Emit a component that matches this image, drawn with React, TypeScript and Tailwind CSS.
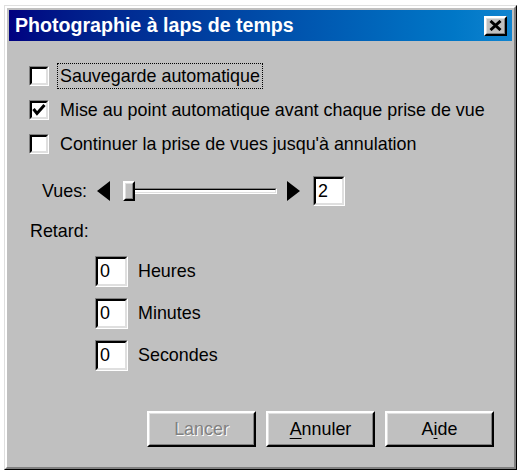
import React from "react";

function Sunken({ className, children }: { className: string; children?: React.ReactNode }) {
  return (
    <div className={`border border-t-[#808080] border-l-[#808080] border-r-white border-b-white ${className}`}>
      <div className="w-full h-full border-2 border-t-black border-l-black border-r-[#dfdfdf] border-b-[#dfdfdf] bg-white flex items-center">
        {children}
      </div>
    </div>
  );
}

function Raised({ className, children }: { className: string; children?: React.ReactNode }) {
  return (
    <div className={`border-2 border-t-white border-l-white border-r-black border-b-black ${className}`}>
      <div className="w-full h-full border border-t-[#dfdfdf] border-l-[#dfdfdf] border-r-[#808080] border-b-[#808080] bg-[#c0c0c0] flex items-center justify-center">
        {children}
      </div>
    </div>
  );
}

function CheckRow({ checked, label, focus }: { checked: boolean; label: string; focus?: boolean }) {
  return (
    <div className="h-[34px] flex items-center pl-[20px]">
      <Sunken className="w-[20px] h-[20px]">
        {checked && (
          <svg width="14" height="14" viewBox="0 0 14 14" className="ml-[0px]">
            <polyline points="1.5,6 5,10.5 12.5,2" fill="none" stroke="black" strokeWidth="3" strokeLinejoin="miter" />
          </svg>
        )}
      </Sunken>
      <span
        className={`ml-[8px] px-[2px] leading-[24px] ${focus ? "border border-dotted border-black" : "border border-transparent"}`}
      >
        {label}
      </span>
    </div>
  );
}

function EditRow({ label }: { label: string }) {
  return (
    <div className="h-[31px] flex items-center pl-[86px]">
      <Sunken className="w-[33px] h-[31px]">
        <span className="pl-[2px]">0</span>
      </Sunken>
      <span className="ml-[10px]">{label}</span>
    </div>
  );
}

export default function App() {
  return (
    <div className="w-[520px] h-[470px] bg-white pt-[5px] pl-[4px] font-['Liberation_Sans',Arial,sans-serif] text-[17.9px] text-black">
      <div className="w-[513px] h-[465px] border border-t-[#dfdfdf] border-l-[#dfdfdf] border-r-black border-b-black">
        <div className="w-full h-full border-2 border-t-white border-l-white border-r-[#808080] border-b-[#808080] bg-[#c0c0c0] p-[2px] flex flex-col">
          <div className="h-[31px] shrink-0 bg-gradient-to-r from-[#000080] to-[#1084d0] flex items-center justify-between pl-[6px] pr-[5px]">
            <span className="text-white font-bold text-[19.6px] leading-none">Photographie à laps de temps</span>
            <Raised className="w-[23px] h-[20px]">
              <svg width="13" height="11" viewBox="0 0 13 11">
                <path d="M1.5 1 L11.5 10 M11.5 1 L1.5 10" stroke="black" strokeWidth="3" fill="none" />
              </svg>
            </Raised>
          </div>

          <div className="mt-[18px] flex flex-col">
            <CheckRow checked={false} label="Sauvegarde automatique" focus />
            <CheckRow checked label="Mise au point automatique avant chaque prise de vue" />
            <CheckRow checked={false} label="Continuer la prise de vues jusqu'à annulation" />
          </div>

          <div className="mt-[15px] h-[30px] flex items-center pl-[33px]">
            <span className="w-[55px]">Vues:</span>
            <svg width="13" height="20" viewBox="0 0 13 20">
              <polygon points="13,0 0,10 13,20" fill="black" />
            </svg>
            <div className="ml-[13px] w-[154px] h-[20px] relative flex items-center">
              <div className="w-full h-[6px] border border-t-[#808080] border-l-[#808080] border-r-white border-b-white">
                <div className="w-full h-full border border-t-black border-l-black border-r-[#dfdfdf] border-b-[#dfdfdf] bg-white" />
              </div>
              <Raised className="absolute left-0 top-0 w-[12px] h-[20px]" />
            </div>
            <svg width="13" height="20" viewBox="0 0 13 20" className="ml-[10px]">
              <polygon points="0,0 13,10 0,20" fill="black" />
            </svg>
            <Sunken className="ml-[13px] w-[32px] h-[30px]">
              <span className="pl-[2px]">2</span>
            </Sunken>
          </div>

          <div className="mt-[14px] h-[22px] flex items-center pl-[21px]">Retard:</div>

          <div className="mt-[14px] flex flex-col gap-[11px]">
            <EditRow label="Heures" />
            <EditRow label="Minutes" />
            <EditRow label="Secondes" />
          </div>

          <div className="mt-[40px] flex justify-end gap-[10px] pr-[18px]">
            <Raised className="w-[109px] h-[36px]">
              <span className="text-[#808080] [text-shadow:1px_1px_0_#ffffff]">Lancer</span>
            </Raised>
            <Raised className="w-[109px] h-[36px]">
              <span>
                <span className="underline underline-offset-[3px]">A</span>nnuler
              </span>
            </Raised>
            <Raised className="w-[109px] h-[36px]">
              <span>
                A<span className="underline underline-offset-[3px]">i</span>de
              </span>
            </Raised>
          </div>
        </div>
      </div>
    </div>
  );
}
